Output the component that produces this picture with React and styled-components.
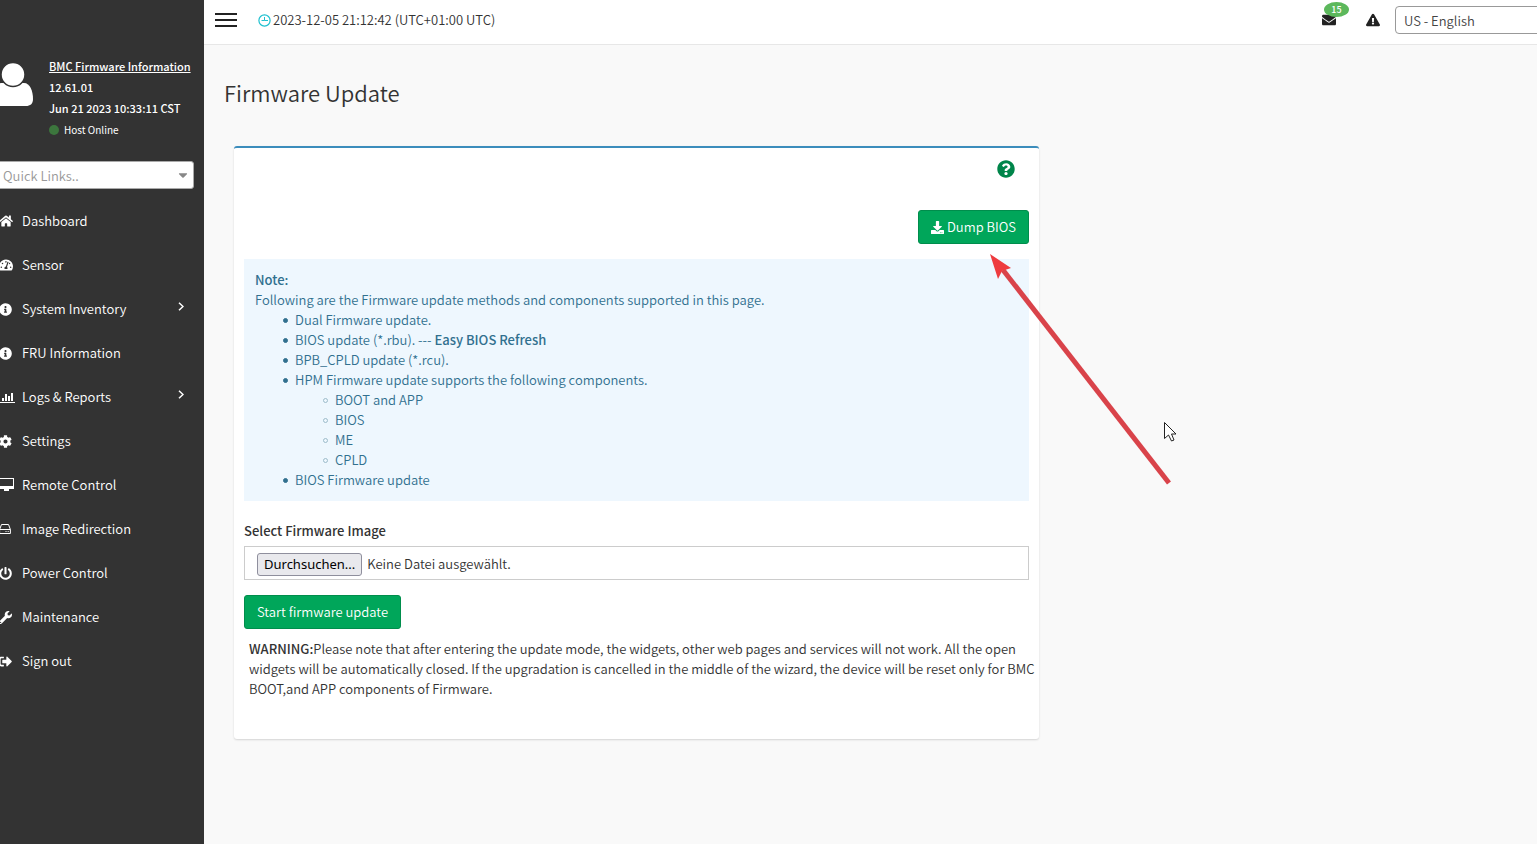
import styled, { createGlobalStyle } from 'styled-components';
import {
  FaHome,
  FaTachometerAlt,
  FaInfoCircle,
  FaCog,
  FaPowerOff,
  FaWrench,
  FaSignOutAlt,
  FaQuestionCircle,
  FaDownload,
  FaExclamationTriangle,
  FaEnvelope,
  FaCaretDown,
} from 'react-icons/fa';

const GlobalStyle = createGlobalStyle`
  *, *::before {
    box-sizing: border-box;
  }

  body {
    margin: 0;
    overflow-x: hidden;
    background-color: #f9f9f9;
    color: #333;
    font-family: "Noto Sans CJK SC", "Open Sans", sans-serif;
    font-size: 13px;
    font-weight: 350;
    line-height: 20px;
  }

  button, input, select {
    font: inherit;
  }

  b {
    font-weight: 500;
  }
`;

/* the shell sits scrolled 26px to the right of its left edge */
const Shell = styled.div`
  display: flex;
  min-height: 100vh;
  margin: 0 -26px;
`;

const Sidebar = styled.aside`
  flex: 0 0 230px;
  padding-top: 56px;
  background-color: #333;
  color: #fff;
`;

const UserPanel = styled.div`
  display: flex;
  gap: 16px;
  padding-left: 19px;
`;

const Avatar = styled.svg`
  flex: none;
  width: 40px;
  height: 44px;
  margin-top: 7px;
`;

const UserInfo = styled.div`
  display: flex;
  flex-direction: column;
  font-size: 11px;
  line-height: 21px;
  font-weight: 500;
  white-space: nowrap;
`;

const InfoLink = styled.a`
  color: #fff;
  text-decoration: underline;
`;

const HostStatus = styled.span`
  display: flex;
  align-items: center;
  gap: 5px;
  font-size: 10px;
  font-weight: 400;
`;

const StatusDot = styled.i`
  width: 10px;
  height: 10px;
  border-radius: 50%;
  background-color: #3c763d;
`;

const QuickLinks = styled.div`
  display: grid;
  align-items: center;
  margin: 21px 10px 10px;
  color: #888;

  > * {
    grid-area: 1 / 1;
  }

  svg {
    justify-self: end;
    margin-right: 4px;
    pointer-events: none;
  }
`;

const QuickSelect = styled.select`
  width: 100%;
  height: 28px;
  padding: 1px 18px 0;
  appearance: none;
  border: 1px solid #aaa;
  border-radius: 3px;
  background-color: #fff;
  color: #999;
`;

const Menu = styled.nav`
  display: flex;
  flex-direction: column;
`;

const MenuItem = styled.a`
  display: flex;
  align-items: center;
  height: 44px;
  padding: 0 20px 0 25px;
  color: #fff;
  text-decoration: none;
`;

const MenuIcon = styled.span`
  display: flex;
  width: 23px;
`;

const MenuLabel = styled.span`
  flex: 1;
`;

const Arrow = styled.svg`
  width: 6px;
  height: 9px;
  margin-bottom: 5px;
`;

const Main = styled.div`
  flex: 1;
  min-width: 0;
`;

const Topbar = styled.header`
  display: flex;
  align-items: center;
  height: 45px;
  padding: 0 0 4px 11px;
  border-bottom: 1px solid #e7e7e7;
  background-color: #fff;
`;

const IconButton = styled.button`
  display: flex;
  padding: 0;
  border: 0;
  background: none;
  color: #222;
  cursor: pointer;
`;

const Clock = styled.div`
  display: flex;
  flex: 1;
  align-items: center;
  gap: 2px;
  margin-left: 21px;
`;

const Tools = styled.div`
  display: flex;
  align-items: center;
`;

const MailButton = styled(IconButton)`
  position: relative;
  margin-right: 30px;
`;

const Badge = styled.span`
  position: absolute;
  top: -11px;
  left: 2px;
  width: 25px;
  height: 15px;
  border-radius: 50%;
  background-color: #5cb85c;
  color: #fff;
  font-size: 9px;
  font-weight: 500;
  line-height: 16px;
  text-align: center;
`;

const LanguageSelect = styled.select`
  width: 168px;
  height: 28px;
  margin-left: 15px;
  padding: 0 4px;
  border: 1px solid #999;
  border-radius: 4px;
  background-color: #fff;
  color: #444;
`;

const Content = styled.main`
  padding: 30px 20px 40px;
`;

const Title = styled.h1`
  margin: 0 0 37px;
  font-size: 22px;
  line-height: 34px;
  font-weight: 350;
`;

const Box = styled.section`
  display: flex;
  flex-direction: column;
  align-items: flex-start;
  width: 62%;
  max-width: 805px;
  margin-left: 10px;
  padding: 12px 10px 30px;
  border-top: 2px solid #3c8dbc;
  border-radius: 3px;
  background-color: #fff;
  box-shadow: 0 1px 2px rgba(0, 0, 0, 0.15);
`;

const HelpButton = styled(IconButton)`
  align-self: flex-end;
  margin: 0 14px 32px 0;
  color: #00854a;
`;

const Button = styled.button`
  display: flex;
  align-items: center;
  align-self: ${({ $end }) => ($end ? 'flex-end' : 'flex-start')};
  gap: 3px;
  height: 34px;
  padding: 0 12px;
  border: 1px solid #008d4c;
  border-radius: 3px;
  background-color: #00a65a;
  color: #fff;
  cursor: pointer;
`;

const Note = styled.div`
  align-self: stretch;
  margin: 15px 0 20px;
  padding: 11px;
  background-color: #eef7fe;
  color: #31708f;
`;

const List = styled.ul`
  margin: 0;
  padding-left: 40px;
  list-style: none;

  > li::before {
    content: '';
    display: inline-block;
    width: 5px;
    height: 5px;
    margin: 0 7px 2px -12px;
    border: 1px solid ${({ $hollow }) => ($hollow ? '#9dbccb' : '#31708f')};
    border-radius: 50%;
    background-color: ${({ $hollow }) => ($hollow ? 'transparent' : '#31708f')};
  }
`;

const FileLabel = styled.label`
  margin-bottom: 5px;
  font-weight: 500;
`;

const FileField = styled.div`
  display: flex;
  align-self: stretch;
  align-items: center;
  gap: 5px;
  height: 34px;
  margin-bottom: 15px;
  padding: 2px 12px 0;
  border: 1px solid #ccc;
`;

const BrowseButton = styled.button`
  height: 23px;
  padding: 0 6px;
  border: 1px solid #8f8f9d;
  border-radius: 3px;
  background-color: #e9e9ed;
  color: #000;
  font-family: "Noto Sans", sans-serif;
  font-weight: 400;
`;

const Warning = styled.p`
  margin: 10px 5px;
  white-space: nowrap;
`;

const Pointer = styled.svg`
  position: absolute;
  top: 250px;
  left: 985px;
  width: 200px;
  height: 240px;
  pointer-events: none;
`;

const StatsIcon = () => (
  <svg width="16" height="14" viewBox="0 0 16 14" fill="currentColor">
    <path d="M0 12h16v1H0zM3 8h2v3H3zM6 4h2v7H6zM9 6h2v5H9zM12 3h2v8h-2z" />
  </svg>
);

const DesktopIcon = () => (
  <svg width="15" height="14" viewBox="0 0 15 14" fill="currentColor">
    <path fillRule="evenodd" d="M0 0h15v11h-5v2H5v-2H0zM1 1v7h13V1z" />
  </svg>
);

const DiskIcon = () => (
  <svg width="12" height="12" viewBox="0 0 12 12" fill="none" stroke="currentColor">
    <path d="M.6 6.500L2.500 1.500h7l1.900 5v4H.6zM.6 6.500h10.800" strokeLinejoin="round" />
    <path d="M6.500 8.500h1M8.700 8.500h1" />
  </svg>
);

const ClockIcon = () => (
  <svg width="13" height="13" viewBox="0 0 13 13" fill="none" stroke="#1fc0cf">
    <circle cx="6.500" cy="6.500" r="5.600" strokeWidth="1.200" />
    <path d="M6.500 3v3.500h3.500M3.500 6.500h3" />
  </svg>
);

const menu = [
  { label: 'Dashboard', icon: <FaHome size={14} /> },
  { label: 'Sensor', icon: <FaTachometerAlt size={14} /> },
  { label: 'System Inventory', icon: <FaInfoCircle size={13} />, sub: true },
  { label: 'FRU Information', icon: <FaInfoCircle size={13} /> },
  { label: 'Logs & Reports', icon: <StatsIcon />, sub: true },
  { label: 'Settings', icon: <FaCog size={13} /> },
  { label: 'Remote Control', icon: <DesktopIcon /> },
  { label: 'Image Redirection', icon: <DiskIcon /> },
  { label: 'Power Control', icon: <FaPowerOff size={13} /> },
  { label: 'Maintenance', icon: <FaWrench size={13} /> },
  { label: 'Sign out', icon: <FaSignOutAlt size={13} /> },
];

const App = () => {
  return (
    <>
      <GlobalStyle />
      <Shell>
        <Sidebar>
          <UserPanel>
            <Avatar viewBox="0 0 40 44" fill="#fff">
              <path d="M9 20C3 20 0 28 0 36c0 5 3 7 7 7h26c4 0 7-2 7-7 0-8-3-16-9-16z" />
              <circle cx="20" cy="11.500" r="12" stroke="#333" strokeWidth="1.500" />
            </Avatar>
            <UserInfo>
              <InfoLink href="#bmc">BMC Firmware Information</InfoLink>
              <span>12.61.01</span>
              <span>Jun 21 2023 10:33:11 CST</span>
              <HostStatus>
                <StatusDot />
                Host Online
              </HostStatus>
            </UserInfo>
          </UserPanel>
          <QuickLinks>
            <QuickSelect aria-label="Quick Links">
              <option>Quick Links..</option>
            </QuickSelect>
            <FaCaretDown size={14} />
          </QuickLinks>
          <Menu>
            {menu.map(({ label, icon, sub }) => (
              <MenuItem href="#" key={label}>
                <MenuIcon>{icon}</MenuIcon>
                <MenuLabel>{label}</MenuLabel>
                {sub && (
                  <Arrow viewBox="0 0 6 9" fill="none" stroke="currentColor" strokeWidth="1.500">
                    <path d="M1 .7l4 3.800-4 3.800" />
                  </Arrow>
                )}
              </MenuItem>
            ))}
          </Menu>
        </Sidebar>

        <Main>
          <Topbar>
            <IconButton aria-label="Toggle navigation">
              <svg width="22" height="14" viewBox="0 0 22 14" fill="currentColor">
                <path d="M0 0h22v2H0zM0 6h22v2H0zM0 12h22v2H0z" />
              </svg>
            </IconButton>
            <Clock>
              <ClockIcon />
              <span>2023-12-05 21:12:42 (UTC+01:00 UTC)</span>
            </Clock>
            <Tools>
              <MailButton aria-label="Messages">
                <FaEnvelope size={14} />
                <Badge>15</Badge>
              </MailButton>
              <IconButton aria-label="Alerts">
                <FaExclamationTriangle size={14} />
              </IconButton>
              <LanguageSelect aria-label="Language">
                <option>US - English</option>
              </LanguageSelect>
            </Tools>
          </Topbar>

          <Content>
            <Title>Firmware Update</Title>
            <Box>
              <HelpButton aria-label="Help">
                <FaQuestionCircle size={18} />
              </HelpButton>
              <Button $end>
                <FaDownload size={13} />
                Dump BIOS
              </Button>
              <Note>
                <b>Note:</b>
                <div>Following are the Firmware update methods and components supported in this page.</div>
                <List>
                  <li>Dual Firmware update.</li>
                  <li>BIOS update (*.rbu). --- <b>Easy BIOS Refresh</b></li>
                  <li>BPB_CPLD update (*.rcu).</li>
                  <li>
                    HPM Firmware update supports the following components.
                    <List $hollow>
                      <li>BOOT and APP</li>
                      <li>BIOS</li>
                      <li>ME</li>
                      <li>CPLD</li>
                    </List>
                  </li>
                  <li>BIOS Firmware update</li>
                </List>
              </Note>
              <FileLabel htmlFor="browse">Select Firmware Image</FileLabel>
              <FileField>
                <BrowseButton id="browse">Durchsuchen...</BrowseButton>
                <span>Keine Datei ausgewählt.</span>
              </FileField>
              <Button>Start firmware update</Button>
              <Warning>
                <b>WARNING:</b>Please note that after entering the update mode, the widgets, other web pages and services will not work. All the open
                <br />
                widgets will be automatically closed. If the upgradation is cancelled in the middle of the wizard, the device will be reset only for BMC
                <br />
                BOOT,and APP components of Firmware.
              </Warning>
            </Box>
          </Content>
        </Main>
      </Shell>
      <Pointer viewBox="0 0 200 240">
        <path d="M18 20L184 233" stroke="#d9434a" strokeWidth="5" />
        <path d="M5 4l21 14-9 3-4 8z" fill="#ee3b3e" />
        <path d="M179.500 172.500v16l4-3.500 3 6 2.500-1-2.500-6h4.500z" fill="#fff" stroke="#222" />
      </Pointer>
    </>
  );
};

export default App;
